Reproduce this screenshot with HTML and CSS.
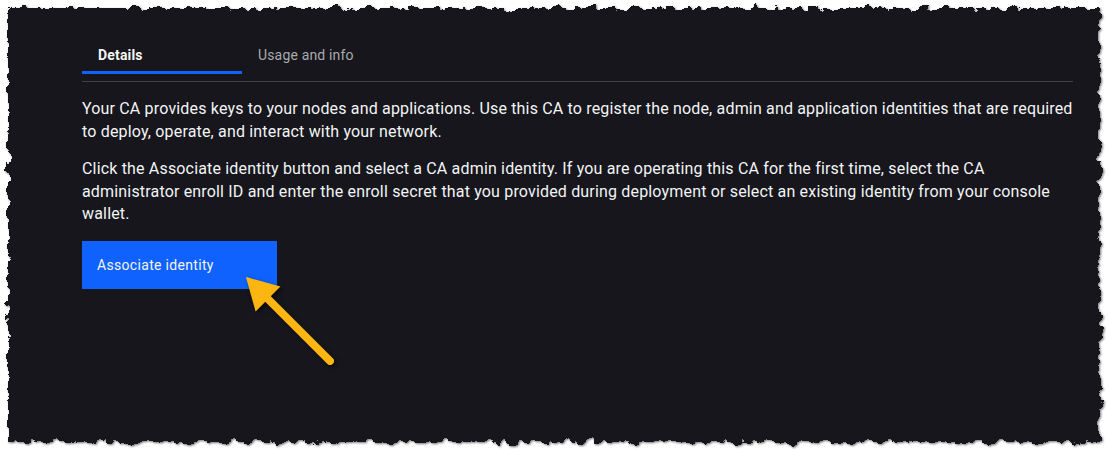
FILE: index.html
```html
<!DOCTYPE html>
<html lang="en">
<head>
<meta charset="utf-8">
<title>Certificate Authority details</title>
<link rel="stylesheet" href="styles.css">
</head>
<body>
<svg class="defs" aria-hidden="true">
  <filter id="torn" x="-3%" y="-6%" width="106%" height="112%">
    <feTurbulence type="fractalNoise" baseFrequency="0.09" numOctaves="4" seed="7" result="noise"/>
    <feDisplacementMap in="SourceGraphic" in2="noise" scale="13" xChannelSelector="R" yChannelSelector="G"/>
  </filter>
</svg>
<main class="panel">
  <nav class="tabs">
    <div class="tab tab-active">Details</div>
    <div class="tab">Usage and info</div>
  </nav>
  <section class="content">
    <p>Your CA provides keys to your nodes and applications. Use this CA to register the node, admin and application identities that are required to deploy, operate, and interact with your network.</p>
    <p>Click the Associate identity button and select a CA admin identity. If you are operating this CA for the first time, select the CA administrator enroll ID and enter the enroll secret that you provided during deployment or select an existing identity from your console wallet.</p>
    <button class="btn-primary" type="button">Associate identity</button>
  </section>
  <svg class="callout-arrow" width="110" height="110" viewBox="0 0 110 110" aria-hidden="true">
    <line x1="24" y1="25" x2="89" y2="90" stroke="#fbb612" stroke-width="8" stroke-linecap="round"/>
    <polygon points="6,7 38,16 15,39" fill="#fbb612" stroke="#fbb612" stroke-width="1.5" stroke-linejoin="miter"/>
  </svg>
</main>
</body>
</html>
```
FILE: styles.css
```css
html, body {
  margin: 0;
  padding: 0;
  background: #ffffff;
}

body {
  width: 1108px;
  height: 449px;
  overflow: hidden;
  font-family: Roboto, "Noto Sans", sans-serif;
}

.defs {
  position: absolute;
  width: 0;
  height: 0;
  overflow: hidden;
}

.panel {
  position: relative;
  isolation: isolate;
  box-sizing: border-box;
  margin: 8px 8px 0 8px;
  height: 434px;
  padding: 24px 27px 0 74px;
  color: #f4f4f4;
}

.panel::before {
  content: "";
  position: absolute;
  inset: 0;
  z-index: -1;
  background: #14181b;
  filter: url(#torn) drop-shadow(1px 1px 1px rgba(0, 0, 0, 0.55));
}

.tabs {
  display: flex;
  padding-bottom: 7px;
  border-bottom: 1px solid #3e4145;
}

.tab {
  box-sizing: border-box;
  width: 160px;
  padding: 14px 16px 7px 16px;
  font-size: 14px;
  line-height: 18px;
  letter-spacing: 0.16px;
  color: #a8abae;
  border-bottom: 3px solid transparent;
}

.tab-active {
  font-weight: 700;
  color: #f4f4f4;
  border-bottom-color: #0f62fe;
}

.content {
  padding-top: 16px;
}

.content p {
  margin: 0 0 15px 0;
  font-size: 16px;
  line-height: 22.5px;
  letter-spacing: 0.17px;
  color: #f2f4f5;
}

.btn-primary {
  display: flex;
  align-items: center;
  box-sizing: border-box;
  margin-top: 14px;
  width: 195px;
  height: 48px;
  padding: 0 15px;
  border: 0;
  background: #0f62fe;
  color: #f4f4f4;
  font-family: Roboto, "Noto Sans", sans-serif;
  font-size: 14px;
  letter-spacing: 0.32px;
  text-align: left;
}

.callout-arrow {
  position: absolute;
  left: 233px;
  top: 263px;
  filter: drop-shadow(2px 2px 2px rgba(0, 0, 0, 0.55));
}
```
